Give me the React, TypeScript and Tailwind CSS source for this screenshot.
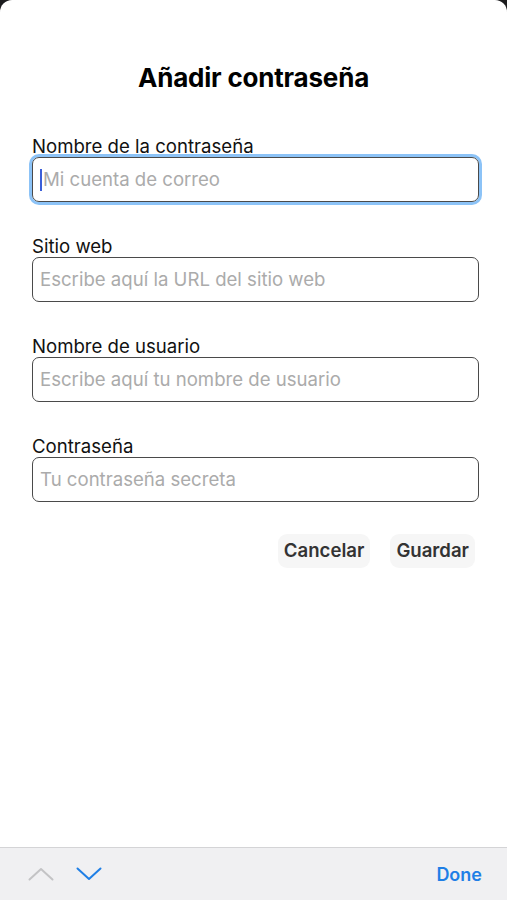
import React from "react";

const Field = ({ label, placeholder, focused }: { label: string; placeholder: string; focused?: boolean }) => (
  <div className="flex flex-col">
    <div className="text-[18.6px] leading-[22px] text-[#111]">{label}</div>
    <div
      className={
        "h-[45px] rounded-[7px] border-[1.5px] border-[#4a4a4a] flex items-center px-[7px] " +
        (focused ? "ring-[3px] ring-[#8cc3f7]" : "")
      }
    >
      {focused && <div className="w-[2px] h-[22px] bg-[#3b5fd9] mr-[1px]" />}
      <span className="text-[18.6px] text-[#ababab]">{placeholder}</span>
    </div>
  </div>
);

export default function App() {
  return (
    <div className="w-[507px] h-[900px] bg-[#1c1c1e] overflow-hidden" style={{ fontFamily: "Inter, 'Noto Sans', sans-serif" }}>
      <div className="w-full h-full bg-white rounded-t-[12px] flex flex-col">
        <div className="flex-1 pl-[32px] pr-[28px]">
          <h1 className="text-center text-[26px] font-bold text-black mt-[61px] leading-[34px] tracking-[-0.2px] ml-[-4px]">Añadir contraseña</h1>
          <div className="mt-[40px] flex flex-col gap-[33px]">
            <Field label="Nombre de la contraseña" placeholder="Mi cuenta de correo" focused />
            <Field label="Sitio web" placeholder="Escribe aquí la URL del sitio web" />
            <Field label="Nombre de usuario" placeholder="Escribe aquí tu nombre de usuario" />
            <Field label="Contraseña" placeholder="Tu contraseña secreta" />
          </div>
          <div className="flex justify-end gap-[20px] mt-[32px] mr-[4px]">
            <button className="h-[34px] px-[6px] rounded-[9px] bg-[#f6f6f6] text-[18.6px] font-semibold text-[#333]">Cancelar</button>
            <button className="h-[34px] px-[6px] rounded-[9px] bg-[#f6f6f6] text-[18.6px] font-semibold text-[#333]">Guardar</button>
          </div>
        </div>
        <div className="h-[53px] bg-[#f0f0f2] border-t border-[#d4d4d6] flex items-center px-[28px]">
          <svg width="26" height="14" viewBox="0 0 26 14" className="mr-[22px]">
            <path d="M1.5 12.5 L13 2 L24.5 12.5" fill="none" stroke="#c3c3c5" strokeWidth="2" strokeLinecap="round" strokeLinejoin="round" />
          </svg>
          <svg width="26" height="14" viewBox="0 0 26 14">
            <path d="M1.5 1.5 L13 12 L24.5 1.5" fill="none" stroke="#1f7fe6" strokeWidth="2" strokeLinecap="round" strokeLinejoin="round" />
          </svg>
          <div className="flex-1" />
          <span className="text-[18px] font-semibold text-[#1f7fe6] mr-[-3px]">Done</span>
        </div>
      </div>
    </div>
  );
}
